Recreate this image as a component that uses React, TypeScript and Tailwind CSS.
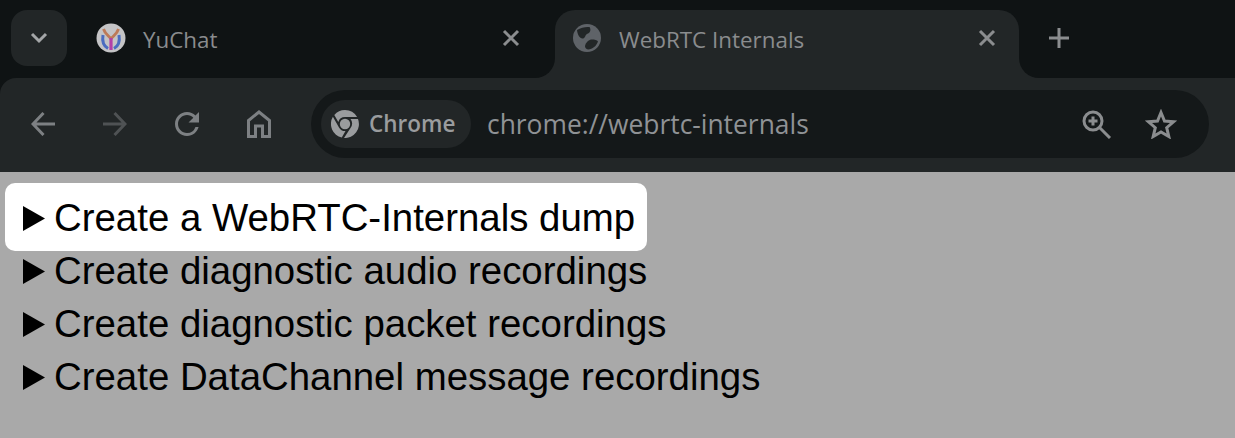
import React from "react";

function Close() {
  return (
    <svg width="18" height="18" viewBox="0 0 18 18" fill="none" stroke="#8b8d8f" strokeWidth="3" className="shrink-0">
      <path d="M2 2 L16 16 M16 2 L2 16" />
    </svg>
  );
}

function YuChatLogo() {
  return (
    <svg width="30" height="30" viewBox="0 0 30 30" fill="none" className="mt-[-1px] mr-[-1px] shrink-0">
      <circle cx="15" cy="15" r="14.5" fill="#c4c4c6" />
      <path d="M7.500 6 C9 11 13 13 15 16 C17 13 21 11 22.500 6" stroke="#bd7a58" strokeWidth="2.800" />
      <path d="M15 15 V27" stroke="#b23fa8" strokeWidth="3.200" />
      <path d="M7 12 C6 18 7.500 23 12 25.500" stroke="#4a6cc0" strokeWidth="3" />
      <path d="M23 12 C24 18 22.500 23 18 25.500" stroke="#4a6cc0" strokeWidth="3" />
    </svg>
  );
}

function Globe() {
  return (
    <svg width="28" height="28" viewBox="0 0 28 28" className="shrink-0">
      <circle cx="14" cy="14" r="14" fill="#5f6368" />
      <path d="M4 6 C8 3.500 13 2.500 16.500 3 C18.500 6 17 9 14 10 C12 11 12.500 14 10 14.500 C7 15 4.500 11 4 6 Z" fill="#222627" />
      <path d="M12 22 C13 18 16 15.500 19 15.500 C21.500 15.500 24 16 25 17.500 C23.500 22 19.500 25 15 25.500 C13 25 12 24 12 22 Z" fill="#222627" />
    </svg>
  );
}

function ChromeIcon() {
  return (
    <svg width="28" height="28" viewBox="0 0 28 28" fill="#9a9c9e" className="shrink-0">
      <circle cx="14" cy="14" r="5.200" />
      <path d="M14 0 A14 14 0 0 1 26.100 7 H14 A7 7 0 0 0 7.300 12 L3.300 5 A14 14 0 0 1 14 0 Z" />
      <path d="M1.900 6.800 L8 17.400 A7 7 0 0 0 14.500 21 L10.800 27.600 A14 14 0 0 1 1.900 6.800 Z" />
      <path d="M27 9 A14 14 0 0 1 13 28 L19.500 18 A7 7 0 0 0 19.500 9 Z" />
    </svg>
  );
}

function Tab({ active, icon, title }: { active?: boolean; icon: React.ReactNode; title: string }) {
  return (
    <div
      className={
        active
          ? "relative flex h-[68px] w-[464px] items-start rounded-t-[20px] bg-[#222627] pt-[14px] pl-[18px] pr-[23px]"
          : "flex h-[68px] w-[464px] items-start pt-[14px] pl-[5px] pr-[35px]"
      }
    >
      {active && (
        <>
          <div className="absolute bottom-0 left-[-20px] h-5 w-5 bg-[#222627]">
            <div className="h-full w-full rounded-br-[20px] bg-[#0f1314]" />
          </div>
          <div className="absolute bottom-0 right-[-20px] h-5 w-5 bg-[#222627]">
            <div className="h-full w-full rounded-bl-[20px] bg-[#0f1314]" />
          </div>
        </>
      )}
      {icon}
      <span className="mt-[1px] ml-[18px] flex-1 font-['Open_Sans','Noto_Sans',sans-serif] text-[22.400px] leading-[30px] text-[#8a8c8e]">
        {title}
      </span>
      <div className="mt-[5px]">
        <Close />
      </div>
    </div>
  );
}

function ToolIcon({ children }: { children: React.ReactNode }) {
  return <div className="flex h-[72px] w-[72px] items-center justify-center">{children}</div>;
}

const rows = [
  "Create a WebRTC-Internals dump",
  "Create diagnostic audio recordings",
  "Create diagnostic packet recordings",
  "Create DataChannel message recordings",
];

export default function App() {
  return (
    <div className="flex h-[438px] w-[1235px] flex-col overflow-hidden bg-[#a9a9a9]">
      <div className="flex h-[78px] shrink-0 items-start bg-[#0f1314] pt-[10px] pl-[11px]">
        <div className="mr-[24px] flex h-14 w-14 items-center justify-center rounded-[16px] bg-[#222627]">
          <svg width="18" height="12" viewBox="0 0 18 12" fill="none" stroke="#a4a6a8" strokeWidth="3">
            <path d="M2 2 L9 9 L16 2" />
          </svg>
        </div>
        <Tab icon={<YuChatLogo />} title="YuChat" />
        <Tab active icon={<Globe />} title="WebRTC Internals" />
        <div className="ml-[20px] flex h-14 w-[40px] items-center justify-center">
          <svg width="22" height="22" viewBox="0 0 22 22" stroke="#8b8d8f" strokeWidth="3" fill="none">
            <path d="M11 1 V21 M1 11 H21" />
          </svg>
        </div>
      </div>

      <div className="shrink-0 bg-[#0f1314]">
        <div className="flex h-[94px] items-center rounded-tl-[16px] bg-[#222627] pb-[2px] pl-[7px] pr-[26px]">
          <ToolIcon>
            <svg width="24" height="24" viewBox="0 0 24 24" fill="none" stroke="#7d8083" strokeWidth="3">
              <path d="M24 12 H3 M12.500 1 L2 12 L12.500 23" />
            </svg>
          </ToolIcon>
          <ToolIcon>
            <svg width="24" height="24" viewBox="0 0 24 24" fill="none" stroke="#4f5254" strokeWidth="3">
              <path d="M0 12 H21 M11.500 1 L22 12 L11.500 23" />
            </svg>
          </ToolIcon>
          <ToolIcon>
            <svg width="24" height="24" viewBox="4 4 16 16" fill="#7d8083">
              <path d="M17.650 6.350A7.958 7.958 0 0 0 12 4c-4.420 0-7.990 3.580-7.990 8s3.570 8 7.990 8c3.730 0 6.840-2.550 7.730-6h-2.080A5.990 5.990 0 0 1 12 18c-3.310 0-6-2.690-6-6s2.690-6 6-6c1.660 0 3.140.690 4.220 1.780L13 11h7V4l-2.350 2.350z" />
            </svg>
          </ToolIcon>
          <ToolIcon>
            <svg width="24" height="28" viewBox="0 0 24 28" fill="none" stroke="#7d8083" strokeWidth="3" className="mt-[-1px]">
              <path d="M1.500 26.500 V10.500 L12 2 L22.500 10.500 V26.500 H15.500 V16 H8.500 V26.500 Z" />
            </svg>
          </ToolIcon>
          <div className="ml-[16px] flex h-[68px] flex-1 items-center rounded-full bg-[#141819] pl-[10px] pr-[32px]">
            <div className="flex h-12 w-[150px] items-center rounded-full bg-[#222627] pl-[10px]">
              <ChromeIcon />
              <span className="ml-[10px] font-['Open_Sans','Noto_Sans',sans-serif] text-[22.500px] font-semibold leading-[30px] text-[#9a9c9e]">
                Chrome
              </span>
            </div>
            <span className="ml-[16px] flex-1 font-['Open_Sans','Noto_Sans',sans-serif] text-[26.400px] leading-[34px] text-[#8f9295]">
              chrome://webrtc-internals
            </span>
            <svg width="30" height="30" viewBox="0 0 30 30" fill="none" stroke="#8b8d8f" strokeWidth="3" className="shrink-0">
              <circle cx="11" cy="12" r="9" />
              <path d="M17.500 18.500 L28 29" />
              <path d="M6.500 12 H15.500 M11 7.500 V16.500" />
            </svg>
            <svg width="32" height="30" viewBox="0 0 32 30" fill="none" stroke="#8b8d8f" strokeWidth="3" className="ml-[33px] shrink-0">
              <path d="M16 3.500 L19.500 12 L28.500 12.800 L21.700 18.700 L23.800 27.500 L16 22.900 L8.200 27.500 L10.300 18.700 L3.500 12.800 L12.500 12 Z" />
            </svg>
          </div>
        </div>
      </div>

      <div className="flex flex-col pt-[20px] font-['Liberation_Sans',Arial,sans-serif] text-[38.400px] leading-[53px] text-black">
        {rows.map((r, i) => (
          <div key={r} className="flex">
            <div
              className={
                i === 0
                  ? "mt-[-9px] mb-[-6px] ml-[5px] flex h-[68px] w-[642px] items-center rounded-[10px] bg-white pt-[3px] pl-[18px]"
                  : "ml-[5px] flex h-[53px] items-center pl-[18px]"
              }
            >
              <svg width="22" height="25" viewBox="0 0 22 25" className="mr-[9px] shrink-0">
                <path d="M0 0 L22 12.500 L0 25 Z" fill="#000" />
              </svg>
              <span className="mt-[-2px]">{r}</span>
            </div>
          </div>
        ))}
      </div>
    </div>
  );
}
